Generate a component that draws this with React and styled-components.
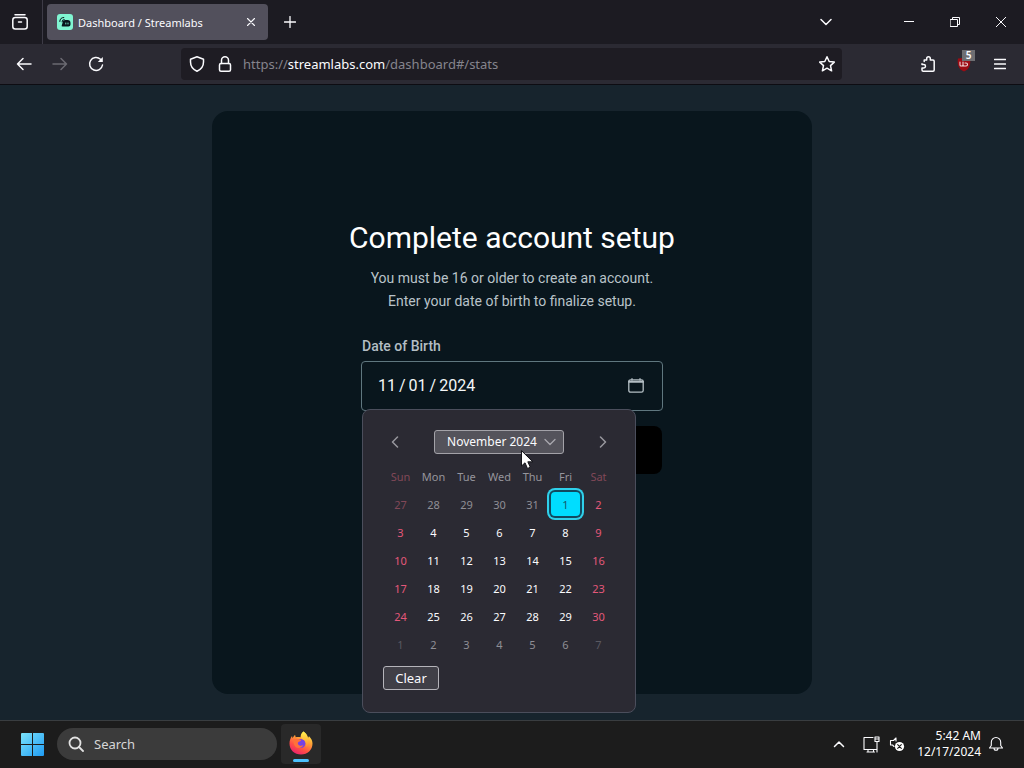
import React from "react";
import styled, { createGlobalStyle } from "styled-components";

const ui = `"Noto Sans", "Open Sans", sans-serif`;
const body = `Roboto, "Liberation Sans", sans-serif`;

const GlobalStyle = createGlobalStyle`
  *, *::before, *::after { box-sizing: border-box; }
  body { margin: 0; background: #17242d; }
  button, input { font: inherit; color: inherit; }
`;

const Screen = styled.div`
  display: flex;
  flex-direction: column;
  min-height: 100vh;
  font-family: ${ui};
  color: #fbfbfe;
`;

const Icon = styled.svg`
  display: block;
  flex: none;
  width: ${(p) => p.$w || 16}px;
  height: ${(p) => p.$h || p.$w || 16}px;
  fill: none;
  stroke: currentColor;
  stroke-width: ${(p) => p.$stroke || 1.5};
  stroke-linecap: round;
  stroke-linejoin: round;
`;

const PlainButton = styled.button`
  display: flex;
  align-items: center;
  justify-content: center;
  flex: none;
  width: ${(p) => p.$w || 36}px;
  height: ${(p) => p.$h || 32}px;
  padding: 0;
  border: 0;
  background: none;
  color: ${(p) => p.$color || "#fbfbfe"};
`;

const MinimizeButton = styled(PlainButton)`
  margin-left: 42px;
`;

const TabStrip = styled.header`
  display: flex;
  align-items: stretch;
  height: 44px;
  background: #1c1b22;
`;

const ViewArea = styled.div`
  display: flex;
  align-items: center;
  padding: 0 4px 0 2px;
  border-right: 1px solid #3d3b46;
`;

const Tab = styled.div`
  display: flex;
  align-items: center;
  width: 221px;
  height: 36px;
  margin: 4px;
  padding: 0 2px 0 10px;
  border-radius: 4px;
  background: #52505c;
  font-size: 11px;
`;

const TabTitle = styled.span`
  flex: 1;
  margin-left: 5px;
  white-space: nowrap;
`;

const WindowButtons = styled.div`
  display: flex;
  align-items: center;
  margin-left: auto;
`;

const Toolbar = styled.nav`
  display: flex;
  align-items: center;
  height: 41px;
  padding: 0 6px;
  background: #2b2a33;
  border-bottom: 1px solid #0d0c12;
`;

const AddressBar = styled.form`
  display: flex;
  align-items: center;
  flex: 1;
  height: 32px;
  margin: 0 68px 0 67px;
  padding: 0 1px 0 2px;
  border-radius: 4px;
  background: #1e1c23;
`;

const Address = styled.a`
  flex: 1;
  padding-left: 4px;
  font-size: 13px;
  color: #85848d;
  text-decoration: none;
  white-space: nowrap;
  strong { font-weight: 400; color: #fbfbfe; }
`;

const ExtensionButton = styled(PlainButton)`
  position: relative;
`;

const Badge = styled.span`
  position: absolute;
  top: 2px;
  right: 7px;
  width: 13px;
  height: 11px;
  background: #6e6e72;
  font-size: 10px;
  font-weight: 600;
  line-height: 11px;
  text-align: center;
`;

const Page = styled.main`
  display: flex;
  flex: 1;
  flex-direction: column;
  align-items: center;
  padding: 26px 16px;
  background: #17242d;
  font-family: ${body};
`;

const Card = styled.section`
  display: flex;
  flex: 1;
  flex-direction: column;
  align-items: center;
  width: 100%;
  max-width: 600px;
  padding: 108px 24px 24px;
  border-radius: 16px;
  background: #09161d;
`;

const Title = styled.h1`
  margin: 0;
  font-size: 30px;
  font-weight: 400;
  line-height: 38px;
  color: #ffffff;
`;

const Lead = styled.p`
  margin: 10px 0 0;
  font-size: 14px;
  line-height: 23px;
  text-align: center;
  color: #b9c3c9;
`;

const Form = styled.form`
  width: 302px;
  margin-top: 23px;
`;

const Label = styled.label`
  display: block;
  padding-left: 1px;
  font-size: 14px;
  font-weight: 500;
  line-height: 20px;
  color: #b4bec4;
`;

const DateField = styled.div`
  position: relative;
  display: flex;
  align-items: center;
  justify-content: space-between;
  height: 50px;
  margin-top: 5px;
  padding: 0 8px 0 16px;
  border: 1px solid #60777f;
  border-radius: 4px;
  background: #09161d;
`;

const DateParts = styled.div`
  display: flex;
  align-items: center;
  gap: 3px;
  font-size: 16px;
  line-height: 24px;
  color: #f4f6f7;
`;

const DatePart = styled.input`
  width: ${(p) => (p.$year ? 37 : 18)}px;
  padding: 0;
  border: 0;
  outline: 0;
  background: none;
`;

const Submit = styled.button`
  display: block;
  width: 300px;
  height: 48px;
  margin: 15px 0 0 1px;
  border: 0;
  border-radius: 8px;
  background: #000000;
`;

const Picker = styled.div`
  position: absolute;
  top: 47px;
  left: 0;
  width: 274px;
  padding: 20px 20px 22px;
  border: 1px solid #4b4e5c;
  border-radius: 8px;
  background: #2b2a33;
  font-family: ${ui};
`;

const PickerHead = styled.div`
  display: flex;
  align-items: center;
  justify-content: space-between;
  height: 24px;
`;

const BoxButton = styled.button`
  display: flex;
  align-items: center;
  justify-content: center;
  gap: 7px;
  width: ${(p) => p.$w}px;
  height: 24px;
  padding: 0 0 0 ${(p) => (p.$hover ? 5 : 0)}px;
  border: 1px solid ${(p) => (p.$hover ? "#a3a2a8" : "#b5b4ba")};
  border-radius: 3px;
  background: ${(p) => (p.$hover ? "#54535b" : "#403f47")};
  font-size: ${(p) => (p.$hover ? 12 : 13)}px;
  line-height: 20px;
  color: #fbfbfe;
  white-space: nowrap;
`;

const Calendar = styled.table`
  width: 231px;
  margin: 8px 0 8px auto;
  border-collapse: collapse;
  table-layout: fixed;
  font-size: 11px;
  th, td { height: 28px; padding: 0; text-align: center; }
`;

const DayName = styled.th`
  font-weight: 400;
  color: ${(p) => (p.$weekend ? "#814858" : "#96959c")};
`;

const tones = {
  day: "#fbfbfe",
  weekend: "#e4587a",
  outside: "#8f8e95",
  outsideWeekend: "#814858",
  faint: "#5a5961",
};

const Day = styled.button`
  display: block;
  width: 33px;
  height: 28px;
  padding: 0;
  border: 0;
  border-radius: 4px;
  background: none;
  color: ${(p) => tones[p.$tone]};
`;

const SelectedDay = styled(Day)`
  width: 29px;
  height: 24px;
  margin: 0 auto;
  background: #00ddff;
  box-shadow: 0 0 0 2px #114a60, 0 0 0 4px #2fd0ea;
  color: #15566a;
`;

const Pointer = styled(Icon)`
  position: absolute;
  top: 40px;
  left: 157px;
`;

const Taskbar = styled.footer`
  display: flex;
  align-items: center;
  height: 48px;
  padding: 0 20px 1px 21px;
  border-top: 1px solid #393d40;
  background: #1c1c1c;
`;

const Search = styled.label`
  display: flex;
  align-items: center;
  gap: 10px;
  width: 220px;
  height: 32px;
  margin: 0 4px 0 13px;
  padding: 0 11px;
  border-radius: 16px;
  background: #3b3b3b;
  color: #e2e2e2;
`;

const SearchInput = styled.input`
  width: 100%;
  padding: 0;
  border: 0;
  background: none;
  font-size: 13px;
  &::placeholder { color: #d6d6d6; opacity: 1; }
`;

const RunningApp = styled.button`
  display: flex;
  flex-direction: column;
  align-items: center;
  gap: 4px;
  width: 40px;
  height: 40px;
  padding: 7px 0 0;
  border: 0;
  border-radius: 4px;
  background: #292929;
  &::after {
    content: "";
    width: 16px;
    height: 3px;
    border-radius: 2px;
    background: #4cc2ff;
  }
`;

const Tray = styled.div`
  display: flex;
  align-items: center;
  margin-left: auto;
`;

const Clock = styled.time`
  margin: 0 7px 0 14px;
  font-size: 12px;
  line-height: 16px;
  text-align: right;
  color: #ffffff;
`;

const names = ["Sun", "Mon", "Tue", "Wed", "Thu", "Fri", "Sat"];
const weeks = [
  [27, 28, 29, 30, 31, 1, 2],
  [3, 4, 5, 6, 7, 8, 9],
  [10, 11, 12, 13, 14, 15, 16],
  [17, 18, 19, 20, 21, 22, 23],
  [24, 25, 26, 27, 28, 29, 30],
  [1, 2, 3, 4, 5, 6, 7],
];

function toneOf(week, day) {
  const weekend = day === 0 || day === 6;
  if (week === 5) return weekend ? "faint" : "outside";
  if (week === 0 && day < 5) return weekend ? "outsideWeekend" : "outside";
  return weekend ? "weekend" : "day";
}

function StreamlabsLogo() {
  return (
    <Icon viewBox="0 0 16 16" aria-hidden="true">
      <rect width="16" height="16" rx="3" fill="#80f5d2" stroke="none" />
      <path d="M5.500 9Q5.500 6 8.500 6H10.500Q13.500 6 13.500 9V10.500Q13.500 12.500 11.500 12.500H5.500Q4.200 12.500 4.800 11.200Z" fill="#09161d" stroke="none" />
      <path d="M2.800 7.500Q2.800 3.500 6.800 3.500M5 7.800Q5 5.500 7.200 5.500" stroke="#09161d" strokeWidth="1" />
      <path d="M8.800 9V10M11 9V10" stroke="#80f5d2" strokeWidth=".9" />
    </Icon>
  );
}

function FirefoxLogo() {
  return (
    <Icon viewBox="0 0 24 24" $w={24} aria-hidden="true">
      <defs>
        <linearGradient id="fire" x1="0.8" y1="0" x2="0.25" y2="1">
          <stop offset="0" stopColor="#fff44f" />
          <stop offset="0.35" stopColor="#ffa436" />
          <stop offset="0.7" stopColor="#ff4f45" />
          <stop offset="1" stopColor="#e91e70" />
        </linearGradient>
        <linearGradient id="flame" x1="0.5" y1="0" x2="0.5" y2="1">
          <stop offset="0" stopColor="#fff44f" />
          <stop offset="1" stopColor="#ff8a2b" />
        </linearGradient>
      </defs>
      <path d="M14.500.500C18 3 18.500 5 19 6.500C19.800 6.600 20 5.500 19.800 5C22.500 7.500 23.500 10 23.500 12.500C23.500 19 18.500 23.500 12 23.500S.5 19 .5 12.500C.5 9.500 1.500 7 3 5L3.600 7.300C4.200 6 5 4.600 6.100 4L6.700 6.200C8.500 5.700 10 6 11.500 6.300C11.500 4 12.500 2 14.500.500Z" fill="url(#fire)" stroke="none" />
      <circle cx="11.800" cy="12.500" r="4.600" fill="#7542e5" stroke="none" />
      <path d="M4 8.500C6.500 6.800 9 8.300 10.500 8.500C12.500 8.800 12.500 10 10.500 10.500C9 11 8.600 12 9 13C9.700 15 13 15.300 14.500 13.800C12.500 18.500 6.500 18 5 13.500Z" fill="#ff7139" stroke="none" />
      <path d="M14.500.500C18 3 18.500 6 19 8C20.500 12.500 18.500 15.500 17 16C18 12 16 9 13.500 8.200C11 6 12 2.500 14.500.500Z" fill="url(#flame)" stroke="none" />
    </Icon>
  );
}

export default function App() {
  return (
    <Screen>
      <GlobalStyle />
      <TabStrip>
        <ViewArea>
          <PlainButton aria-label="Firefox View">
            <Icon viewBox="0 0 16 16">
              <path d="M3 .8H13" />
              <rect x=".8" y="3.500" width="14.400" height="11.500" rx="2.500" />
              <path d="M6.500 8H9.500" />
            </Icon>
          </PlainButton>
        </ViewArea>
        <Tab>
          <StreamlabsLogo />
          <TabTitle>Dashboard / Streamlabs</TabTitle>
          <PlainButton $w={30} aria-label="Close tab">
            <Icon viewBox="0 0 8 8" $w={8} $stroke={1.1}><path d="M.5.5 7.500 7.500M7.500.5.5 7.500" /></Icon>
          </PlainButton>
        </Tab>
        <PlainButton $h={44} aria-label="New tab">
          <Icon viewBox="0 0 12 12" $w={12} $stroke={1.3}><path d="M6 .5V11.500M.5 6H11.500" /></Icon>
        </PlainButton>
        <WindowButtons>
          <PlainButton $w={36} aria-label="List all tabs">
            <Icon viewBox="0 0 12 12" $w={12}><path d="M1 3.500 6 8.500 11 3.500" /></Icon>
          </PlainButton>
          <MinimizeButton $w={46} aria-label="Minimize">
            <Icon viewBox="0 0 10 10" $w={10} $stroke={1}><path d="M0 4.500H10" /></Icon>
          </MinimizeButton>
          <PlainButton $w={46} aria-label="Restore">
            <Icon viewBox="0 0 10 10" $w={10} $stroke={1}><path d="M.5 2.500H7.500V9.500H.5ZM2.500 2.500V.5H9.500V7.500H7.500" /></Icon>
          </PlainButton>
          <PlainButton $w={46} aria-label="Close">
            <Icon viewBox="0 0 10 10" $w={10} $stroke={1}><path d="M0 0 10 10M10 0 0 10" /></Icon>
          </PlainButton>
        </WindowButtons>
      </TabStrip>

      <Toolbar>
        <PlainButton aria-label="Back">
          <Icon viewBox="0 0 16 16"><path d="M15 8H1.500M7 2.500 1.500 8 7 13.500" /></Icon>
        </PlainButton>
        <PlainButton $color="#6b6a72" aria-label="Forward">
          <Icon viewBox="0 0 16 16"><path d="M1 8H14.500M9 2.500 14.500 8 9 13.500" /></Icon>
        </PlainButton>
        <PlainButton aria-label="Reload">
          <Icon viewBox="0 0 16 16">
            <path d="M14.500 9A6.500 6.500 0 1 1 12.500 3.200" />
            <path d="M14.800 1V6H9.800Z" fill="currentColor" stroke="none" />
          </Icon>
        </PlainButton>
        <AddressBar>
          <PlainButton type="button" $w={28} aria-label="Tracking protection">
            <Icon viewBox="0 0 16 16"><path d="M8 .8 14.500 3.200V6C14.500 10.500 12 13.500 8 15.200C4 13.500 1.500 10.500 1.500 6V3.200Z" /></Icon>
          </PlainButton>
          <PlainButton type="button" $w={28} aria-label="Connection secure">
            <Icon viewBox="0 0 16 16"><rect x="2.500" y="7.500" width="11" height="7.700" rx="1.500" /><path d="M4.500 7.500V4.300A3.500 3.500 0 0 1 11.500 4.300V7.500" /></Icon>
          </PlainButton>
          <Address href="#/stats">https://<strong>streamlabs.com</strong>/dashboard#/stats</Address>
          <PlainButton type="button" $w={28} aria-label="Bookmark this page">
            <Icon viewBox="0 0 16 16"><path d="M8 .8 10.200 5.500 15.300 6.100 11.500 9.600 12.600 14.800 8 12.200 3.400 14.800 4.500 9.600 .7 6.100 5.800 5.500Z" /></Icon>
          </PlainButton>
        </AddressBar>
        <PlainButton aria-label="Extensions">
          <Icon viewBox="0 0 16 16"><path d="M4.200 4H6.700V2.600A1.800 1.800 0 0 1 10.300 2.600V4H13Q14.200 4 14.200 5.200V14Q14.200 15.200 13 15.200H3.200Q2 15.200 2 14V12H3.800A1.700 1.700 0 0 0 3.800 8.600H2V7.800M4.200 4V5.500" /></Icon>
        </PlainButton>
        <ExtensionButton aria-label="uBlock Origin">
          <Icon viewBox="0 0 16 16">
            <path d="M8 1C10 2 12 2.500 14 2.500C15 8 13.500 13.500 8 15.500C2.500 13.500 1 8 2 2.500C4 2.500 6 2 8 1Z" fill="#9c0c14" stroke="none" />
            <path d="M4 6V9Q4 10 5 10H6Q7 10 7 9V6M7 9Q7 10 8 10H10Q11.500 10 11.500 8.500T10 7H9" strokeWidth="1.100" stroke="#f3d9da" />
          </Icon>
          <Badge>5</Badge>
        </ExtensionButton>
        <PlainButton aria-label="Open application menu">
          <Icon viewBox="0 0 12 12" $w={12} $stroke={1.3}><path d="M.5 1.500H11.500M.5 6H11.500M.5 10.500H11.500" /></Icon>
        </PlainButton>
      </Toolbar>

      <Page>
        <Card>
          <Title>Complete account setup</Title>
          <Lead>
            You must be 16 or older to create an account.
            <br />
            Enter your date of birth to finalize setup.
          </Lead>
          <Form>
            <Label htmlFor="birth">Date of Birth</Label>
            <DateField>
              <DateParts role="group" aria-label="Date of Birth">
                <DatePart id="birth" type="text" defaultValue="11" aria-label="Month" />
                <span>/</span>
                <DatePart type="text" defaultValue="01" aria-label="Day" />
                <span>/</span>
                <DatePart $year type="text" defaultValue="2024" aria-label="Year" />
              </DateParts>
              <PlainButton type="button" aria-label="Open calendar" $color="#b4bec4">
                <Icon viewBox="0 0 16 16" $stroke={1.3}>
                  <rect x=".8" y="1.800" width="14.400" height="12.400" rx="1.800" />
                  <path d="M1 3.800H15" strokeWidth="2" />
                  <path d="M4 .7V2M12 .7V2" />
                </Icon>
              </PlainButton>
              <Picker role="dialog" aria-label="Choose a date">
                <PickerHead>
                  <PlainButton type="button" $w={24} $h={24} $color="#98979e" aria-label="Previous month">
                    <Icon viewBox="0 0 12 12" $w={12}><path d="M8.500 1 3.500 6 8.500 11" /></Icon>
                  </PlainButton>
                  <BoxButton type="button" $w={130} $hover>
                    November 2024
                    <Icon viewBox="0 0 12 12" $w={12} $stroke={1.3} color="#a8a7ad"><path d="M1 3.500 6 8.500 11 3.500" /></Icon>
                  </BoxButton>
                  <PlainButton type="button" $w={24} $h={24} $color="#98979e" aria-label="Next month">
                    <Icon viewBox="0 0 12 12" $w={12}><path d="M3.500 1 8.500 6 3.500 11" /></Icon>
                  </PlainButton>
                </PickerHead>
                <Calendar>
                  <thead>
                    <tr>
                      {names.map((name, i) => (
                        <DayName key={name} scope="col" $weekend={i === 0 || i === 6}>{name}</DayName>
                      ))}
                    </tr>
                  </thead>
                  <tbody>
                    {weeks.map((week, w) => (
                      <tr key={w}>
                        {week.map((day, d) => {
                          const Cell = w === 0 && day === 1 ? SelectedDay : Day;
                          return (
                            <td key={d}>
                              <Cell type="button" $tone={toneOf(w, d)}>{day}</Cell>
                            </td>
                          );
                        })}
                      </tr>
                    ))}
                  </tbody>
                </Calendar>
                <BoxButton type="button" $w={56}>Clear</BoxButton>
                <Pointer viewBox="0 0 14 20" $w={14} $h={20} $stroke={1} aria-hidden="true">
                  <path d="M1.500 1V16L5 12.800L7.500 18.500L10.300 17.200L7.800 11.800H12.500Z" fill="#ffffff" stroke="#15151a" />
                </Pointer>
              </Picker>
            </DateField>
            <Submit type="button" aria-label="Continue" />
          </Form>
        </Card>
      </Page>

      <Taskbar>
        <PlainButton $w={23} $h={40} aria-label="Start">
          <Icon viewBox="0 0 23 23" $w={23}>
            <defs>
              <linearGradient id="pane" gradientUnits="userSpaceOnUse" x1="0" y1="0" x2="23" y2="23">
                <stop offset="0" stopColor="#7be3fb" />
                <stop offset="1" stopColor="#1f9bf3" />
              </linearGradient>
            </defs>
            <path d="M1 0H11V11H0V1Q0 0 1 0ZM12 0H22Q23 0 23 1V11H12ZM0 12H11V23H1Q0 23 0 22ZM12 12H23V22Q23 23 22 23H12Z" fill="url(#pane)" stroke="none" />
          </Icon>
        </PlainButton>
        <Search>
          <Icon viewBox="0 0 16 16" $stroke={1.8}><circle cx="7" cy="7" r="5.500" /><path d="M11 11 15 15" /></Icon>
          <SearchInput type="text" placeholder="Search" aria-label="Search" />
        </Search>
        <RunningApp aria-label="Firefox"><FirefoxLogo /></RunningApp>
        <Tray>
          <PlainButton $w={24} aria-label="Show hidden icons">
            <Icon viewBox="0 0 12 12" $w={12}><path d="M1.500 8.500 6 4 10.500 8.500" /></Icon>
          </PlainButton>
          <PlainButton $w={40} aria-label="Network">
            <Icon viewBox="0 0 17 17" $w={17} $stroke={1.1}><path d="M10 1.500H1V13.500H14M5 13.500V16H10.500V13.500M4 16H11.500M12 1V5.500H16V1ZM12 3H16M14 5.500V16" /></Icon>
          </PlainButton>
          <PlainButton $w={12} aria-label="Volume muted">
            <Icon viewBox="0 0 16 16" $stroke={1.1}>
              <path d="M7 2V5M7 2 4.500 4.500H1.500V9H3.500L5 10.500" />
              <circle cx="10.500" cy="10.500" r="4.600" fill="#ffffff" stroke="none" />
              <path d="M8.700 8.700 12.300 12.300M12.300 8.700 8.700 12.300" stroke="#1c1c1c" />
            </Icon>
          </PlainButton>
          <Clock dateTime="2024-12-17T05:42">5:42 AM<br />12/17/2024</Clock>
          <PlainButton $w={16} aria-label="Notifications">
            <Icon viewBox="0 0 16 16" $stroke={1.1}><path d="M8 1.500A4.700 4.700 0 0 1 12.700 6.200V9.500L14.500 12H1.500L3.300 9.500V6.200A4.700 4.700 0 0 1 8 1.500ZM6 12.300A2 2 0 0 0 10 12.300" /></Icon>
          </PlainButton>
        </Tray>
      </Taskbar>
    </Screen>
  );
}
